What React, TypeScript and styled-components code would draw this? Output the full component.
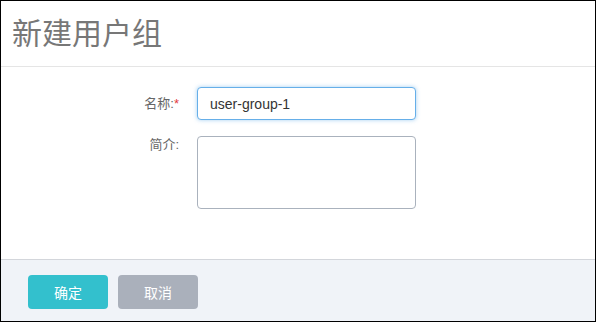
import React, {useState} from "react";
import styled, {createGlobalStyle} from "styled-components";

const GlobalStyle = createGlobalStyle`
    html, body {
        margin: 0;
        padding: 0;
        background: #fff;
    }

    * {
        box-sizing: border-box;
    }
`;

const Dialog = styled.div`
    width: 596px;
    height: 322px;
    border: 1px solid #000;
    display: flex;
    flex-direction: column;
    font-family: "Liberation Sans", "Noto Sans CJK SC", sans-serif;
    background: #fff;
`;

const Header = styled.div`
    height: 66px;
    border-bottom: 1px solid #e5e5e5;
    display: flex;
    align-items: center;
    padding-left: 11px;
    flex-shrink: 0;
`;

const Heading = styled.h1`
    margin: 0;
    font-size: 30px;
    line-height: 36px;
    font-weight: 400;
    color: #777;
`;

const Body = styled.div`
    flex: 1;
    padding-top: 20px;
    display: flex;
    flex-direction: column;
    gap: 16px;
`;

const FormRow = styled.div<{ $top?: boolean }>`
    display: flex;
    align-items: ${({$top}) => $top ? "flex-start" : "center"};
`;

const Label = styled.label`
    width: 178px;
    text-align: right;
    font-size: 13px;
    line-height: 17px;
    color: #666;
    flex-shrink: 0;
`;

const Required = styled.span`
    color: #e4393c;
`;

const Field = styled.div`
    margin-left: 18px;
`;

const TextInput = styled.input`
    width: 219px;
    height: 33px;
    padding: 0 12px;
    border: 1px solid #66afe9;
    border-radius: 4px;
    box-shadow: 0 0 4px rgba(102, 175, 233, 0.6);
    font-family: "Liberation Sans", "Noto Sans CJK SC", sans-serif;
    font-size: 14px;
    color: #333;
    outline: none;
    caret-color: #333;
`;

const TextArea = styled.textarea`
    display: block;
    width: 219px;
    height: 73px;
    border: 1px solid #aab2bd;
    border-radius: 4px;
    padding: 6px 11px;
    font-family: "Liberation Sans", "Noto Sans CJK SC", sans-serif;
    font-size: 14px;
    color: #333;
    resize: none;
    outline: none;
`;

const Footer = styled.div`
    height: 62px;
    border-top: 1px solid #d3d6db;
    background: #f0f3f8;
    display: flex;
    gap: 10px;
    padding: 15px 0 0 27px;
    flex-shrink: 0;
`;

const Button = styled.button<{ $variant: "primary" | "secondary" }>`
    width: 80px;
    height: 34px;
    border: none;
    border-radius: 4px;
    color: #fff;
    font-family: "Liberation Sans", "Noto Sans CJK SC", sans-serif;
    font-size: 14px;
    cursor: pointer;
    background: ${({$variant}) => $variant === "primary" ? "#33c0cd" : "#aab0bb"};
`;

export default function App() {
    const [name, setName] = useState("user-group-1");
    const [description, setDescription] = useState("");

    return <>
        <GlobalStyle/>
        <Dialog>
            <Header>
                <Heading>新建用户组</Heading>
            </Header>
            <Body>
                <FormRow>
                    <Label>名称:<Required>*</Required></Label>
                    <Field>
                        <TextInput autoFocus value={name} onChange={e => setName(e.target.value)}/>
                    </Field>
                </FormRow>
                <FormRow $top>
                    <Label>简介:</Label>
                    <Field>
                        <TextArea value={description} onChange={e => setDescription(e.target.value)}/>
                    </Field>
                </FormRow>
            </Body>
            <Footer>
                <Button $variant="primary">确定</Button>
                <Button $variant="secondary">取消</Button>
            </Footer>
        </Dialog>
    </>;
}
